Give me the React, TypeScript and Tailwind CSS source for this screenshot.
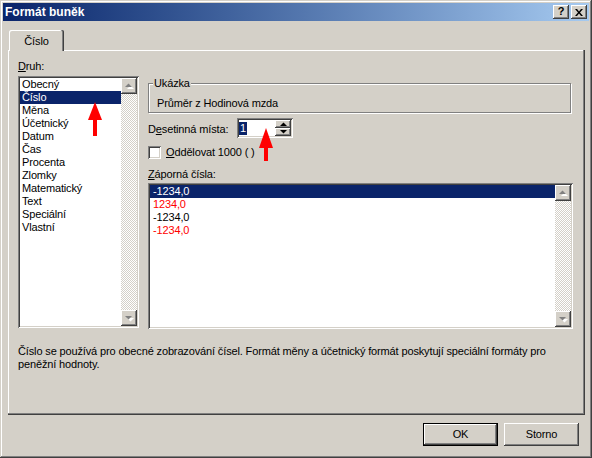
import React from "react";

const sunken =
  "shadow-[inset_1px_1px_#808080,inset_-1px_-1px_#ffffff,inset_2px_2px_#404040,inset_-2px_-2px_#d4d0c8]";
const raised =
  "shadow-[inset_-1px_-1px_#404040,inset_1px_1px_#ffffff,inset_-2px_-2px_#808080,inset_2px_2px_#d4d0c8]";
const checker =
  "bg-[repeating-conic-gradient(#d4d0c8_0%_25%,#ffffff_0%_50%)] bg-[length:2px_2px]";

function DisabledArrow({ up }: { up: boolean }) {
  return (
    <svg width="16" height="16" viewBox="0 0 16 16">
      {up ? (
        <>
          <polygon points="5,10 12,10 8.5,6.5" fill="#ffffff" transform="translate(1,1)" />
          <polygon points="4,9 11,9 7.5,5.5" fill="#808080" />
        </>
      ) : (
        <>
          <polygon points="5,7 12,7 8.5,10.5" fill="#ffffff" transform="translate(1,1)" />
          <polygon points="4,6 11,6 7.5,9.5" fill="#808080" />
        </>
      )}
    </svg>
  );
}

function ScrollBar() {
  return (
    <div className="w-[16px] flex flex-col">
      <div className={`h-[16px] bg-[#d4d0c8] ${raised}`}>
        <DisabledArrow up />
      </div>
      <div className={`flex-1 ${checker}`} />
      <div className={`h-[16px] bg-[#d4d0c8] ${raised}`}>
        <DisabledArrow up={false} />
      </div>
    </div>
  );
}

const kinds = [
  "Obecný",
  "Číslo",
  "Měna",
  "Účetnický",
  "Datum",
  "Čas",
  "Procenta",
  "Zlomky",
  "Matematický",
  "Text",
  "Speciální",
  "Vlastní",
];

const negatives = [
  { t: "-1234,0", sel: true, red: false },
  { t: "1234,0", sel: false, red: true },
  { t: "-1234,0", sel: false, red: false },
  { t: "-1234,0", sel: false, red: true },
];

export default function App() {
  return (
    <div
      className={`relative w-[592px] h-[458px] bg-[#d4d0c8] p-[3px] font-['Liberation_Sans',Arial,sans-serif] text-[11px] leading-[13px] tracking-[-0.14px] text-black select-none shadow-[inset_-1px_-1px_#404040,inset_1px_1px_#d4d0c8,inset_-2px_-2px_#808080,inset_2px_2px_#ffffff]`}
    >
      {/* Title bar */}
      <div className="h-[18px] flex items-center pl-[2px] pr-[2px] bg-linear-to-r from-[#0a246a] to-[#a6caf0]">
        <div className="flex-1 font-bold text-white text-[12px] tracking-normal">Formát buněk</div>
        <div className="flex gap-[2px]">
          <div className={`w-[16px] h-[14px] bg-[#d4d0c8] ${raised} flex items-center justify-center`}>
            <span className="font-bold text-[11px] leading-[11px] mt-[-1px]">?</span>
          </div>
          <div className={`w-[16px] h-[14px] bg-[#d4d0c8] ${raised} flex items-center justify-center`}>
            <svg width="8" height="7" viewBox="0 0 8 7">
              <path d="M0 0h2l2 2.5L6 0h2L5 3.5 8 7H6L4 4.5 2 7H0l3-3.5z" fill="#000" />
            </svg>
          </div>
        </div>
      </div>

      {/* Content */}
      <div className="pl-[5px] pr-[2px] pt-[9px]">
        {/* Tab */}
        <div
          className={`relative z-10 ml-[1px] w-[55px] h-[21px] bg-[#d4d0c8] rounded-t-[2px] flex items-center justify-center shadow-[inset_-1px_0_#404040,inset_-2px_0_#808080,inset_1px_1px_#ffffff]`}
        >
          <span className="mt-[1px]">Číslo</span>
        </div>

        {/* Panel */}
        <div className="relative mt-[-1px] h-[365px] w-[577px] bg-[#d4d0c8] pt-[10px] pl-[10px] shadow-[inset_-1px_-1px_#404040,inset_-2px_-2px_#808080,inset_1px_1px_#ffffff]">
          <div className="flex">
            {/* Left column */}
            <div className="w-[121px] flex flex-col">
              <div className="h-[13px]">
                <span className="underline">D</span>ruh:
              </div>
              <div className={`mt-[3px] h-[252px] p-[2px] bg-white ${sunken} flex`}>
                <div className="flex-1 flex flex-col">
                  {kinds.map((k, i) => (
                    <div
                      key={k}
                      className={`h-[13px] pl-[2px] whitespace-nowrap ${
                        i === 1 ? "bg-[#0a246a] text-white" : ""
                      }`}
                    >
                      {k}
                    </div>
                  ))}
                </div>
                <ScrollBar />
              </div>
            </div>

            {/* Right column */}
            <div className="ml-[9px] w-[425px] flex flex-col pt-[17px]">
              {/* Group box */}
              <div className="relative w-[423px]">
                <div className="absolute left-[5px] top-0 px-[1px] bg-[#d4d0c8] h-[13px] z-10">Ukázka</div>
                <div className="mt-[6px] h-[30px] border border-[#808080] shadow-[inset_1px_1px_#ffffff,1px_1px_#ffffff] pt-[13px] pl-[8px]">
                  Průměr z Hodinová mzda
                </div>
              </div>

              {/* Spin row */}
              <div className="mt-[5px] h-[20px] flex items-center">
                <div className="w-[89px] mt-[2px]">
                  D<span className="underline">e</span>setinná místa:
                </div>
                <div className={`w-[56px] h-[20px] p-[2px] bg-white ${sunken} flex`}>
                  <div className="flex-1 pt-[2px]">
                    <span className="inline-block h-[13px] px-[1px] bg-[#0a246a] text-white">1</span>
                  </div>
                  <div className="w-[16px] flex flex-col">
                    <div className={`h-[8px] bg-[#d4d0c8] ${raised} flex items-center justify-center`}>
                      <svg width="7" height="4" viewBox="0 0 7 4">
                        <polygon points="0,4 7,4 3.5,0.5" fill="#000" />
                      </svg>
                    </div>
                    <div className={`h-[8px] bg-[#d4d0c8] ${raised} flex items-center justify-center`}>
                      <svg width="7" height="4" viewBox="0 0 7 4">
                        <polygon points="0,0 7,0 3.5,3.5" fill="#000" />
                      </svg>
                    </div>
                  </div>
                </div>
              </div>

              {/* Checkbox */}
              <div className="mt-[8px] h-[13px] flex items-center">
                <div className={`w-[13px] h-[13px] bg-white ${sunken}`} />
                <div className="ml-[5px]">
                  <span className="underline">O</span>ddělovat 1000 ( )
                </div>
              </div>

              {/* Negative numbers */}
              <div className="mt-[9px] h-[13px]">
                <span className="underline">Z</span>áporná čísla:
              </div>
              <div className={`mt-[2px] w-[425px] h-[146px] p-[2px] bg-white ${sunken} flex`}>
                <div className="flex-1 flex flex-col">
                  {negatives.map((n, i) => (
                    <div
                      key={i}
                      className={`h-[13px] pl-[3px] ${
                        n.sel ? "bg-[#0a246a] text-white" : n.red ? "text-[#ff0000]" : "text-black"
                      }`}
                    >
                      {n.t}
                    </div>
                  ))}
                </div>
                <ScrollBar />
              </div>
            </div>
          </div>

          {/* Description */}
          <div className="mt-[16px] whitespace-nowrap">
            Číslo se používá pro obecné zobrazování čísel. Formát měny a účetnický formát poskytují speciální formáty pro
            <br />
            peněžní hodnoty.
          </div>
        </div>

        {/* Buttons */}
        <div className="mt-[8px] flex justify-end gap-[6px] pr-[8px]">
          <div className="w-[75px] h-[23px] border border-black">
            <div className={`w-full h-full flex items-center justify-center ${raised}`}>OK</div>
          </div>
          <div className={`w-[75px] h-[23px] flex items-center justify-center ${raised}`}>Storno</div>
        </div>
      </div>

      {/* Red annotation arrows */}
      <svg className="absolute left-[87px] top-[101px]" width="16" height="35" viewBox="0 0 16 35">
        <polygon points="8,1 1,19 15,19" fill="#ff0000" />
        <rect x="6" y="18" width="4" height="17" fill="#ff0000" />
      </svg>
      <svg className="absolute left-[258px] top-[127px]" width="16" height="35" viewBox="0 0 16 35">
        <polygon points="8,1 1,21 15,21" fill="#ff0000" />
        <rect x="6" y="20" width="4" height="14" fill="#ff0000" />
      </svg>
    </div>
  );
}
